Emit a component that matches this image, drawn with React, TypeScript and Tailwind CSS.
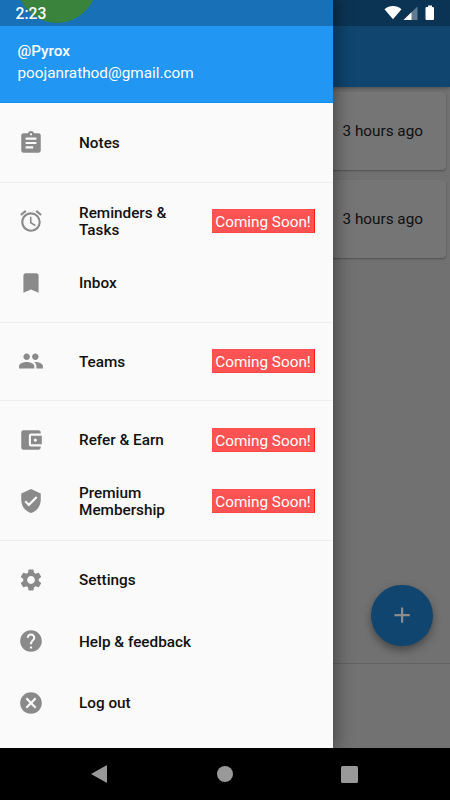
import React from 'react';
import { IconType } from 'react-icons';
import {
  MdAccessAlarm,
  MdAccountBalanceWallet,
  MdAdd,
  MdAssignment,
  MdBookmark,
  MdCancel,
  MdHelp,
  MdPeople,
  MdSettings,
  MdVerifiedUser,
} from 'react-icons/md';

interface MenuItem {
  icon: IconType;
  label: string;
  comingSoon?: boolean;
}

// Each inner list is one section of the drawer, split by a divider
const MENU: MenuItem[][] = [
  [{ icon: MdAssignment, label: 'Notes' }],
  [
    { icon: MdAccessAlarm, label: 'Reminders & Tasks', comingSoon: true },
    { icon: MdBookmark, label: 'Inbox' },
  ],
  [{ icon: MdPeople, label: 'Teams', comingSoon: true }],
  [
    { icon: MdAccountBalanceWallet, label: 'Refer & Earn', comingSoon: true },
    { icon: MdVerifiedUser, label: 'Premium Membership', comingSoon: true },
  ],
  [
    { icon: MdSettings, label: 'Settings' },
    { icon: MdHelp, label: 'Help & feedback' },
    { icon: MdCancel, label: 'Log out' },
  ],
];

const NOTES = ['3 hours ago', '3 hours ago'];

const MenuRow: React.FC<{ item: MenuItem }> = ({ item }) => {
  const Icon = item.icon;
  return (
    <div className="flex h-[61.25px] items-center pr-[17.5px] pl-[18px]">
      <Icon className="size-[26px] shrink-0 text-[#8a8a8a]" />
      <span className="ml-[35px] w-[116px] pt-[2px] text-[15.3px] leading-[17.5px] font-medium text-[#111]">
        {item.label}
      </span>
      {item.comingSoon && (
        <span className="ml-auto flex h-6 w-[103px] items-center justify-center border-r border-b border-[#ff1a1a] border-b-[#ff4545] bg-[#ff5252] pt-[3px] text-[15.3px] leading-5 whitespace-nowrap text-white">
          Coming Soon!
        </span>
      )}
    </div>
  );
};

const Drawer: React.FC = () => (
  <aside className="absolute inset-y-0 left-0 w-[332.5px] overflow-hidden bg-[#fafafa] shadow-[0_0_16px_3px_rgba(0,0,0,0.4)]">
    <div className="relative h-[103px] overflow-hidden border-b border-[#0f8ff0] bg-[#2196f3] pt-[40px] pl-[17.5px] text-[15.3px] leading-[22px] text-white">
      <div className="absolute -top-[57px] left-[17px] size-20 rounded-full bg-[#4caf50]" />
      <p className="font-medium">@Pyrox</p>
      <p>poojanrathod@gmail.com</p>
    </div>
    <nav className="pt-[9px]">
      {MENU.map((section, i) => (
        <React.Fragment key={i}>
          {i > 0 && (
            <div className="flex h-[17.5px] items-center">
              <div className="h-px w-full bg-[#eee]" />
            </div>
          )}
          {section.map(item => (
            <MenuRow key={item.label} item={item} />
          ))}
        </React.Fragment>
      ))}
    </nav>
  </aside>
);

// Notes list behind the drawer, already dimmed by the modal barrier
const NotesScreen: React.FC = () => (
  <div className="flex h-full flex-col bg-[#717171]">
    <header className="z-0 h-[87px] shrink-0 bg-[#0f456f] shadow-[0_1px_4px_rgba(0,0,0,0.35)]" />
    <main className="flex flex-1 flex-col gap-[9.5px] px-1 pt-[5px]">
      {NOTES.map((time, i) => (
        <div
          key={i}
          className="flex h-[78px] items-center justify-end rounded-[4px] bg-[#757575] pt-px pr-[23px] text-[15.3px] text-[#0f0f0f] shadow-[0_1px_2px_rgba(0,0,0,0.3)]"
        >
          {time}
        </div>
      ))}
      <div className="mt-auto mr-[13.5px] mb-[17px] flex size-[61.5px] items-center justify-center self-end rounded-full bg-[#0f456f] shadow-[0_4px_9px_rgba(0,0,0,0.38)]">
        <MdAdd className="size-[26.25px] text-[#8c8c8c]" />
      </div>
    </main>
    <footer className="h-[85px] shrink-0 border-t border-[#636363] bg-[#727272]" />
  </div>
);

const StatusBar: React.FC = () => (
  <div className="absolute inset-x-0 top-0 flex h-[26px] items-center justify-between bg-black/25 pr-[15px] pl-[15.5px]">
    <span className="pt-px text-[15.7px] font-medium text-white">2:23</span>
    <svg className="h-[16px] w-[51px]" viewBox="0 0 51 16">
      <path d="M0.5 4.2C5.5-0.2 12.5-0.2 17.5 4.2L9 14.2Z" fill="#fff" />
      <path d="M33.5 1.5V15H19.5Z" fill="#fff" fillOpacity="0.35" />
      <path d="M27.5 7.2V15H19.5Z" fill="#fff" />
      <path d="M44 0.5h4V2h1q1 0 1 1v11q0 1-1 1h-6.500q-1 0-1-1V3q0-1 1-1H44Z" fill="#fff" />
    </svg>
  </div>
);

const NavigationBar: React.FC = () => (
  <div className="flex h-[52px] shrink-0 items-center justify-between bg-black pr-[92px] pl-[91px] text-[#999]">
    <svg className="h-[18px] w-4" viewBox="0 0 16 18" fill="currentColor">
      <path d="M0 9 16 0v18Z" />
    </svg>
    <div className="ml-[2px] size-4 rounded-full bg-[#999]" />
    <div className="size-[17px] rounded-[1.5px] bg-[#999]" />
  </div>
);

const App: React.FC = () => (
  <div className="flex h-[800px] w-[450px] flex-col overflow-hidden bg-black font-[Roboto,sans-serif]">
    <div className="relative h-[748px] shrink-0 overflow-hidden">
      <NotesScreen />
      <Drawer />
      <StatusBar />
    </div>
    <NavigationBar />
  </div>
);

export default App;
